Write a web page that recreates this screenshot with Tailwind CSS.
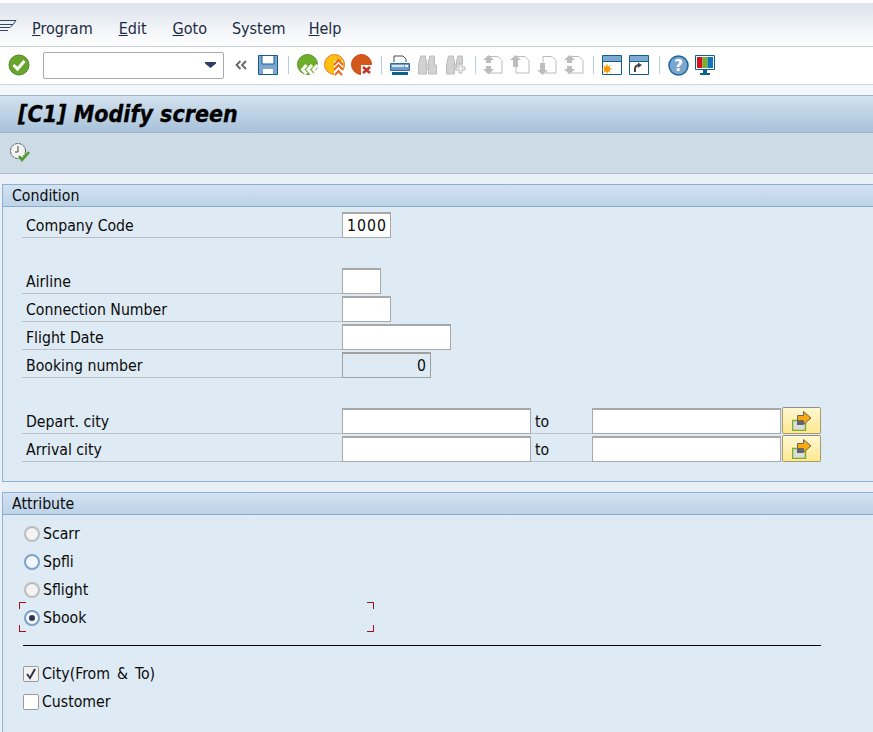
<!DOCTYPE html>
<html lang="en">
<head>
  <meta charset="UTF-8" />
  <title>[C1] Modify screen</title>
  <script src="https://cdn.jsdelivr.net/npm/@tailwindcss/browser@4"></script>
</head>
<body class="bg-[#e9f0f7] h-[732px] overflow-hidden font-['DejaVu_Sans_Condensed','Noto_Sans',sans-serif] text-[15.7px] text-[#0a0a0a]">

  <!-- Menu bar -->
  <div class="h-[47px] pt-[3px] bg-white">
    <div class="h-[44px] border-b border-[#c9d1dc] bg-gradient-to-b from-[#dde3ec] to-white flex items-center pt-[8px]">
      <svg class="w-[17px] h-[14px] mb-[6px]" viewBox="0 0 17 14" fill="none" stroke="#2f4a68" stroke-width="1"><path d="M0 1.500h16l-3 4h-13M0 8.500h10l3-3M0 11.500h8"/></svg>
      <div class="ml-[15px] flex gap-[26px] text-[16px] text-[#1c2b45]">
        <span><u>P</u>rogram</span>
        <span><u>E</u>dit</span>
        <span><u>G</u>oto</span>
        <span class="-ml-[1px] -mr-[3px]">System</span>
        <span><u>H</u>elp</span>
      </div>
    </div>
  </div>

  <!-- System toolbar -->
  <div class="h-[38px] pb-[1px] border-b border-[#cdd5e0] bg-white flex items-center">
    <svg class="ml-[8px] w-[22px] h-[22px]" viewBox="0 0 22 22"><circle cx="11" cy="11" r="10" fill="#6aa52b" stroke="#4d8a2a"/><path d="M5.500 11l4 4 7-8" fill="none" stroke="#fff" stroke-width="3"/></svg>
    <div class="ml-[13px] w-[181px] h-[27px] bg-white border border-[#a9a9a9] rounded-[2px] flex items-center justify-end pr-[7px]">
      <svg class="w-[11px] h-[6px]" viewBox="0 0 11 6"><path d="M0 0h11v1.500l-5.500 4.500-5.500-4.500z" fill="#2b3f66"/></svg>
    </div>
    <svg class="ml-[11px] w-[12px] h-[10px]" viewBox="0 0 12 10" fill="none" stroke="#666" stroke-width="1.800"><path d="M5.500 1l-4 4 4 4M11 1l-4 4 4 4"/></svg>
    <svg class="ml-[11px] w-[20px] h-[20px]" viewBox="0 0 20 20"><path d="M.5.500h19v19h-19z" fill="#7ea6cf" stroke="#10608f"/><path d="M4 1h12v8h-12zM5 14h10v5h-10z" fill="#fff"/><path d="M4 1v8h12v-8" fill="none" stroke="#10608f"/></svg>
    <div class="ml-[10px] w-[1px] h-[18px] bg-[#b4cbe0]"></div>

    <svg class="ml-[8px] w-[22px] h-[22px]" viewBox="0 0 22 22"><circle cx="10.500" cy="10.500" r="10" fill="#6fae2a" stroke="#4e8f30"/><path d="M9.500 11l-4 4.500 4 4.500M15 11l-4 4.500 4 4.500M20.500 11l-4 4.500 4 4.500" fill="none" stroke="#fff" stroke-width="3"/></svg>
    <svg class="ml-[5px] w-[22px] h-[22px]" viewBox="0 0 22 22"><circle cx="10.500" cy="10.500" r="10" fill="#fdc00f" stroke="#e8742b"/><path d="M10 7h9v14h-9z" fill="#fff"/><path d="M10 11l4.500-5 4.500 5M10 16l4.500-5 4.500 5M11 21l3.500-4 3.500 4" fill="none" stroke="#e8691e" stroke-width="2"/></svg>
    <svg class="ml-[5px] w-[22px] h-[22px]" viewBox="0 0 22 22"><circle cx="10.500" cy="10.500" r="10" fill="#d5581b" stroke="#c8471a"/><path d="M10 11h11v10h-11z" fill="#fff"/><path d="M12 13l7 6M19 13l-7 6" stroke="#c0392b" stroke-width="2.800"/></svg>
    <div class="ml-[8px] w-[1px] h-[18px] bg-[#b4cbe0]"></div>

    <!-- Print / find -->
    <svg class="ml-[8px] w-[20px] h-[21px]" viewBox="0 0 20 21"><path d="M4 7v-6h9l3 3v3" fill="#fff" stroke="#4b4b4b"/><path d="M.5 8.500h19v7h-19z" fill="#6f9cc8" stroke="#2c6f9e"/><path d="M2 10h12v2h-12z" fill="#d8e6f2"/><path d="M15 10h3v2h-3z" fill="#fff"/><path d="M2 17h16v3h-16z" fill="#105f8e"/></svg>
    <svg class="ml-[8px] w-[19px] h-[20px]" viewBox="0 0 19 20" fill="#d2d2d2" stroke="#bcbcbc"><path d="M2.500 1h5v2l1 3v13h-8v-9zM11.500 1h5v9l2 0v9h-8v-13l1-3z"/><path d="M8 9h3v5h-3z"/></svg>
    <svg class="ml-[9px] w-[20px] h-[20px]" viewBox="0 0 20 20" fill="#d2d2d2" stroke="#bcbcbc"><path d="M2.500 1h5v2l1 3v13h-8v-9zM11.500 1h5v8h-6v-3l1-3z"/><path d="M8 9h3v5h-3z"/><path d="M13 9h3v3h3v3h-3v3h-3v-3h-3v-3h3z" fill="#ececec"/></svg>
    <div class="ml-[9px] w-[1px] h-[18px] bg-[#b4cbe0]"></div>

    <!-- Page navigation, disabled -->
    <svg class="ml-[7px] w-[20px] h-[20px]" viewBox="0 0 20 20"><path d="M7 1.500h8l4 4v12.500h-12" fill="#fff" stroke="#bcbcbc"/><path d="M5.500 0l5.500 5h-3v3h-5v-3h-3zM3 11h5v3h3l-5.500 5.500-5.500-5.500h3z" fill="#bdbdbd"/></svg>
    <svg class="ml-[7px] w-[20px] h-[20px]" viewBox="0 0 20 20"><path d="M7 1.500h8l4 4v12.500h-13v-6" fill="#fff" stroke="#bcbcbc"/><path d="M5.500 0l5.500 5h-3v7h-5v-7h-3z" fill="#bdbdbd"/></svg>
    <svg class="ml-[7px] w-[20px] h-[20px]" viewBox="0 0 20 20"><path d="M6 1.500h9l4 4v12.500h-11" fill="#fff" stroke="#bcbcbc"/><path d="M6 1.500v6" stroke="#bcbcbc"/><path d="M3 8h5v7h3l-5.500 5-5.500-5h3z" fill="#bdbdbd"/></svg>
    <svg class="ml-[7px] w-[20px] h-[20px]" viewBox="0 0 20 20"><path d="M7 1.500h8l4 4v12.500h-12" fill="#fff" stroke="#bcbcbc"/><path d="M5.500 0l5.500 5h-3v3h-5v-3h-3zM3 11h5v3h3l-5.500 5.500-5.500-5.500h3z" fill="#bdbdbd"/></svg>
    <div class="ml-[9px] w-[1px] h-[18px] bg-[#b4cbe0]"></div>

    <!-- Session / shortcut -->
    <svg class="ml-[8px] w-[20px] h-[20px]" viewBox="0 0 20 20"><path d="M.5.500h19v19h-19z" fill="#fff" stroke="#10608f"/><path d="M1 1h18v5h-18z" fill="#7fa9d1"/><path d="M0 6.500h20" stroke="#10608f"/><circle cx="5" cy="14" r="3" fill="#f59a00"/><path d="M5 9v10M0 14h10M1.500 10.500l7 7M8.500 10.500l-7 7" stroke="#f59a00"/></svg>
    <svg class="ml-[7px] w-[20px] h-[20px]" viewBox="0 0 20 20"><path d="M.5.500h19v19h-19z" fill="#fff" stroke="#10608f"/><path d="M1 1h18v5h-18z" fill="#7fa9d1"/><path d="M0 6.500h20" stroke="#10608f"/><path d="M6 17v-3c0-3 2-4 5-4" fill="none" stroke="#444" stroke-width="2"/><path d="M9 7.500l4 2.500-4 3z" fill="#444"/></svg>
    <div class="ml-[10px] w-[1px] h-[18px] bg-[#b4cbe0]"></div>

    <svg class="ml-[8px] w-[21px] h-[21px]" viewBox="0 0 21 21"><circle cx="10.500" cy="10.500" r="9.500" fill="#7ba6d0" stroke="#17659a" stroke-width="1.500"/><text x="10.500" y="16" text-anchor="middle" font-size="15" font-weight="700" fill="#fff" font-family="DejaVu Sans">?</text></svg>
    <svg class="ml-[6px] w-[20px] h-[20px]" viewBox="0 0 20 20"><path d="M.5.500h19v14h-19z" fill="#fff" stroke="#10608f"/><path d="M2 2h5.500v11h-5.500z" fill="#d4121a"/><path d="M7.500 2h5v11h-5z" fill="#7cb02c"/><path d="M12.500 2h5.500v11h-5.500z" fill="#0f75bc"/><path d="M8 15h4v3h-4zM5 18h10v2h-10z" fill="#10608f"/></svg>
  </div>

  <div class="h-[10px] bg-[#f3f6fb]"></div>

  <!-- Title -->
  <div class="h-[38px] border-t border-b border-[#9fb4c8] bg-gradient-to-b from-[#d3e2ef] to-[#a8c2da] flex items-center pl-[18px]">
    <h1 class="text-[23px] font-bold italic text-black [-webkit-text-stroke:0.3px_black]">[C1] Modify screen</h1>
  </div>

  <!-- Application toolbar -->
  <div class="h-[41px] border-b border-[#a9bccd] bg-[#cddbe7] flex items-center pl-[10px]">
    <svg class="w-[20px] h-[20px]" viewBox="0 0 20 20"><circle cx="8" cy="8" r="7.500" fill="#f4f4f4" stroke="#555" stroke-dasharray="3 1"/><path d="M8 3v6h-3" fill="none" stroke="#444"/><path d="M9 13l3 4 7-8" fill="none" stroke="#4f9a2a" stroke-width="2.500"/></svg>
  </div>

  <div class="h-[10px]"></div>

  <!-- Condition -->
  <section class="ml-[2px] h-[298px] border-t border-l border-b border-[#8fb0d0] bg-[#deeaf4]">
    <div class="h-[22px] border-b border-[#8fabca] bg-gradient-to-b from-[#d2e2f1] to-[#bdd3e8] pl-[9px] leading-[21px]">Condition</div>
    <div class="pt-[3px] pl-[19px]">
      <div class="flex h-[28px] items-end">
        <div class="w-[320px] h-[27px] pl-[4px] border-b border-[#b9c0c7] leading-[29px]">Company Code</div>
        <div class="w-[49px] h-[26px] bg-white border border-[#a8a8a8] border-t-[2px] text-right pr-[3px] tracking-[1px] leading-[23px]">1000</div>
      </div>
      <div class="h-[28px]"></div>
      <div class="flex h-[28px] items-end">
        <div class="w-[320px] h-[27px] pl-[4px] border-b border-[#b9c0c7] leading-[29px]">Airline</div>
        <div class="w-[39px] h-[26px] bg-white border border-[#a8a8a8] border-t-[2px]"></div>
      </div>
      <div class="flex h-[28px] items-end">
        <div class="w-[320px] h-[27px] pl-[4px] border-b border-[#b9c0c7] leading-[29px]">Connection Number</div>
        <div class="w-[49px] h-[26px] bg-white border border-[#a8a8a8] border-t-[2px]"></div>
      </div>
      <div class="flex h-[28px] items-end">
        <div class="w-[320px] h-[27px] pl-[4px] border-b border-[#b9c0c7] leading-[29px]">Flight Date</div>
        <div class="w-[109px] h-[26px] bg-white border border-[#a8a8a8] border-t-[2px]"></div>
      </div>
      <div class="flex h-[28px] items-end">
        <div class="w-[320px] h-[27px] pl-[4px] border-b border-[#b9c0c7] leading-[29px]">Booking number</div>
        <div class="w-[89px] h-[26px] bg-[#deeaf4] border border-[#a0a0a0] border-t-[2px] text-right pr-[4px] leading-[23px]">0</div>
      </div>
      <div class="h-[28px]"></div>
      <div class="flex h-[28px] items-end">
        <div class="w-[320px] h-[27px] pl-[4px] border-b border-[#b9c0c7] leading-[29px]">Depart. city</div>
        <div class="w-[189px] h-[26px] bg-white border border-[#a8a8a8] border-t-[2px]"></div>
        <div class="w-[61px] h-[27px] pl-[4px] border-b border-[#b9c0c7] leading-[29px]">to</div>
        <div class="w-[189px] h-[26px] bg-white border border-[#a8a8a8] border-t-[2px]"></div>
        <button class="ml-[1px] w-[39px] h-[27px] rounded-[2px] border border-[#a79b6b] border-t-[#8d8d8d] bg-gradient-to-b from-[#fff8d2] to-[#ffe88f] flex items-center justify-center">
          <svg class="w-[20px] h-[20px]" viewBox="0 0 20 20"><path d="M.5 9.500h13v10h-13z" fill="#dcdcdc" stroke="#7cae2a" stroke-width="1.500"/><path d="M5 7h6v7h-6z" fill="#666"/><path d="M5.500 4.500h6v-4l7.500 6.500-7.500 6.500v-4h-6z" fill="#f9a90f" stroke="#666"/></svg>
        </button>
      </div>
      <div class="flex h-[28px] items-end">
        <div class="w-[320px] h-[27px] pl-[4px] border-b border-[#b9c0c7] leading-[29px]">Arrival city</div>
        <div class="w-[189px] h-[26px] bg-white border border-[#a8a8a8] border-t-[2px]"></div>
        <div class="w-[61px] h-[27px] pl-[4px] border-b border-[#b9c0c7] leading-[29px]">to</div>
        <div class="w-[189px] h-[26px] bg-white border border-[#a8a8a8] border-t-[2px]"></div>
        <button class="ml-[1px] w-[39px] h-[27px] rounded-[2px] border border-[#a79b6b] border-t-[#8d8d8d] bg-gradient-to-b from-[#fff8d2] to-[#ffe88f] flex items-center justify-center">
          <svg class="w-[20px] h-[20px]" viewBox="0 0 20 20"><path d="M.5 9.500h13v10h-13z" fill="#dcdcdc" stroke="#7cae2a" stroke-width="1.500"/><path d="M5 7h6v7h-6z" fill="#666"/><path d="M5.500 4.500h6v-4l7.500 6.500-7.500 6.500v-4h-6z" fill="#f9a90f" stroke="#666"/></svg>
        </button>
      </div>
    </div>
  </section>

  <div class="h-[10px]"></div>

  <!-- Attribute -->
  <section class="ml-[2px] h-[240px] border-t border-l border-[#8fb0d0] bg-[#deeaf4]">
    <div class="h-[22px] border-b border-[#8fabca] bg-gradient-to-b from-[#d2e2f1] to-[#bdd3e8] pl-[9px] leading-[21px]">Attribute</div>
    <div class="pt-[5px] pl-[21px]">
      <div class="flex h-[28px] items-center gap-[3px]">
        <span class="w-[16px] h-[16px] rounded-full bg-[#f3f3f3] border-2 border-[#bcbcbc]"></span>
        <span>Scarr</span>
      </div>
      <div class="flex h-[28px] items-center gap-[3px]">
        <span class="w-[16px] h-[16px] rounded-full bg-[#f3f6fa] border-2 border-[#7ba1cc]"></span>
        <span>Spfli</span>
      </div>
      <div class="flex h-[28px] items-center gap-[3px]">
        <span class="w-[16px] h-[16px] rounded-full bg-[#f3f3f3] border-2 border-[#bcbcbc]"></span>
        <span>Sflight</span>
      </div>
      <div class="relative flex h-[28px] items-center gap-[3px]">
        <span class="w-[16px] h-[16px] rounded-full bg-[#f3f6fa] border-2 border-[#7ba1cc] flex items-center justify-center">
          <span class="w-[6px] h-[6px] rounded-full bg-[#33334d]"></span>
        </span>
        <span>Sbook</span>
        <!-- Focus corners -->
        <span class="absolute left-[-5px] top-[-2px] w-[7px] h-[7px] border-t border-l border-[#a01020]"></span>
        <span class="absolute left-[343px] top-[-2px] w-[7px] h-[7px] border-t border-r border-[#a01020]"></span>
        <span class="absolute left-[-5px] top-[21px] w-[7px] h-[7px] border-b border-l border-[#a01020]"></span>
        <span class="absolute left-[343px] top-[21px] w-[7px] h-[7px] border-b border-r border-[#a01020]"></span>
      </div>
      <div class="mt-[13px] -ml-[1px] w-[798px] h-[1px] bg-black"></div>
      <div class="mt-[14px] -ml-[1px] flex h-[28px] items-center gap-[3px]">
        <span class="w-[16px] h-[16px] rounded-[2px] bg-[#f2f2f2] border border-[#9a9a9a] flex items-center justify-center">
          <svg class="w-[12px] h-[12px]" viewBox="0 0 12 12"><path d="M2 6l3 4 5-9" fill="none" stroke="#33334d" stroke-width="2"/></svg>
        </span>
        <span class="[word-spacing:2.5px]">City(From &amp; To)</span>
      </div>
      <div class="-ml-[1px] flex h-[28px] items-center gap-[3px]">
        <span class="w-[16px] h-[16px] rounded-[2px] bg-white border border-[#9a9a9a]"></span>
        <span>Customer</span>
      </div>
    </div>
  </section>
</body>
</html>
